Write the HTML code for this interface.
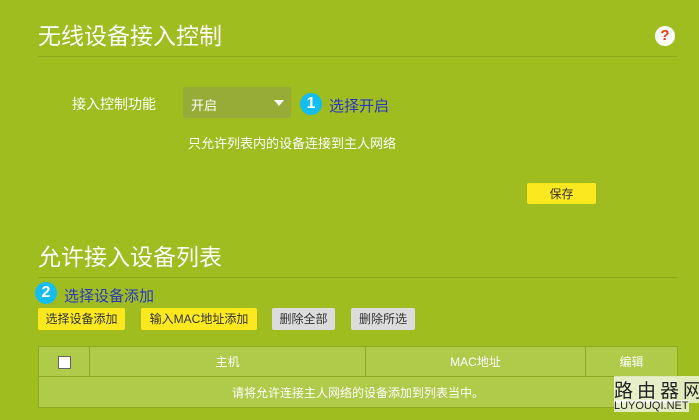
<!DOCTYPE html><html><head><meta charset="utf-8"><style>
body{margin:0;width:699px;height:420px;background:#9fbd1f;font-family:"Liberation Sans","Noto Sans CJK SC",sans-serif;position:relative;overflow:hidden;color:#fff}
.a{position:absolute;white-space:nowrap}
.t{font-size:23px}
.line{position:absolute;left:38px;width:639px;height:1px;background:#8da81a}
.btn{position:absolute;top:308px;height:22px;line-height:22px;font-size:12px;color:#333;text-align:center;border-radius:2px}
.y{background:#fbe81e}.g{background:#dcdcdc}
.num{position:absolute;width:22px;height:22px;border-radius:50%;background:#13bdf0;color:#fff;font-weight:bold;font-size:16px;text-align:center;line-height:22px}
.blue{color:#2b35c8;font-size:15px}
table{position:absolute;left:38px;top:346px;width:640px;border-collapse:collapse;background:#b0ca4a;font-size:12px;table-layout:fixed}
td{border:1px solid #8fa821;height:29px;padding:0;text-align:center;color:#fff}
</style></head><body>
<div class="a t" style="left:38px;top:17px">无线设备接入控制</div>
<div class="a" style="left:655px;top:26px;width:20px;height:20px;border-radius:50%;background:#fff;color:#f03a0a;font-weight:bold;font-size:15px;text-align:center;line-height:20px">?</div>
<div class="line" style="top:56px"></div>
<div class="a" style="left:72px;top:94px;font-size:14px">接入控制功能</div>
<div class="a" style="left:183px;top:87px;width:108px;height:31px;background:#97ac37;border-radius:2px"></div>
<div class="a" style="left:191px;top:95px;font-size:13px">开启</div>
<div class="a" style="left:274px;top:100px;width:0;height:0;border-left:5px solid transparent;border-right:5px solid transparent;border-top:6px solid #fff"></div>
<div class="num" style="left:300px;top:93px">1</div>
<div class="a blue" style="left:329px;top:95px">选择开启</div>
<div class="a" style="left:188px;top:133px;font-size:13px">只允许列表内的设备连接到主人网络</div>
<div class="btn y" style="left:527px;top:183px;width:69px;height:21px">保存</div>
<div class="a t" style="left:38px;top:238px">允许接入设备列表</div>
<div class="line" style="top:277px"></div>
<div class="num" style="left:35px;top:282px">2</div>
<div class="a blue" style="left:64px;top:285px">选择设备添加</div>
<div class="btn y" style="left:38px;width:87px">选择设备添加</div>
<div class="btn y" style="left:141px;width:116px">输入MAC地址添加</div>
<div class="btn g" style="left:272px;width:63px">删除全部</div>
<div class="btn g" style="left:351px;width:64px">删除所选</div>
<table><tr><td style="width:50px"><span style="display:inline-block;width:11px;height:11px;background:#fff;border:1px solid #666;vertical-align:middle"></span></td><td style="width:275px">主机</td><td style="width:219px">MAC地址</td><td>编辑</td></tr>
<tr><td colspan="4" style="height:30px">请将允许连接主人网络的设备添加到列表当中。</td></tr></table>
<div class="a" style="left:614px;top:376px;font-size:19px;color:#222;letter-spacing:4px;background:rgba(255,255,255,.7)">路由器网</div>
<div class="a" style="left:614px;top:400px;font-size:11px;color:#222;background:rgba(255,255,255,.7)">LUYOUQI.NET</div>
</body></html>
